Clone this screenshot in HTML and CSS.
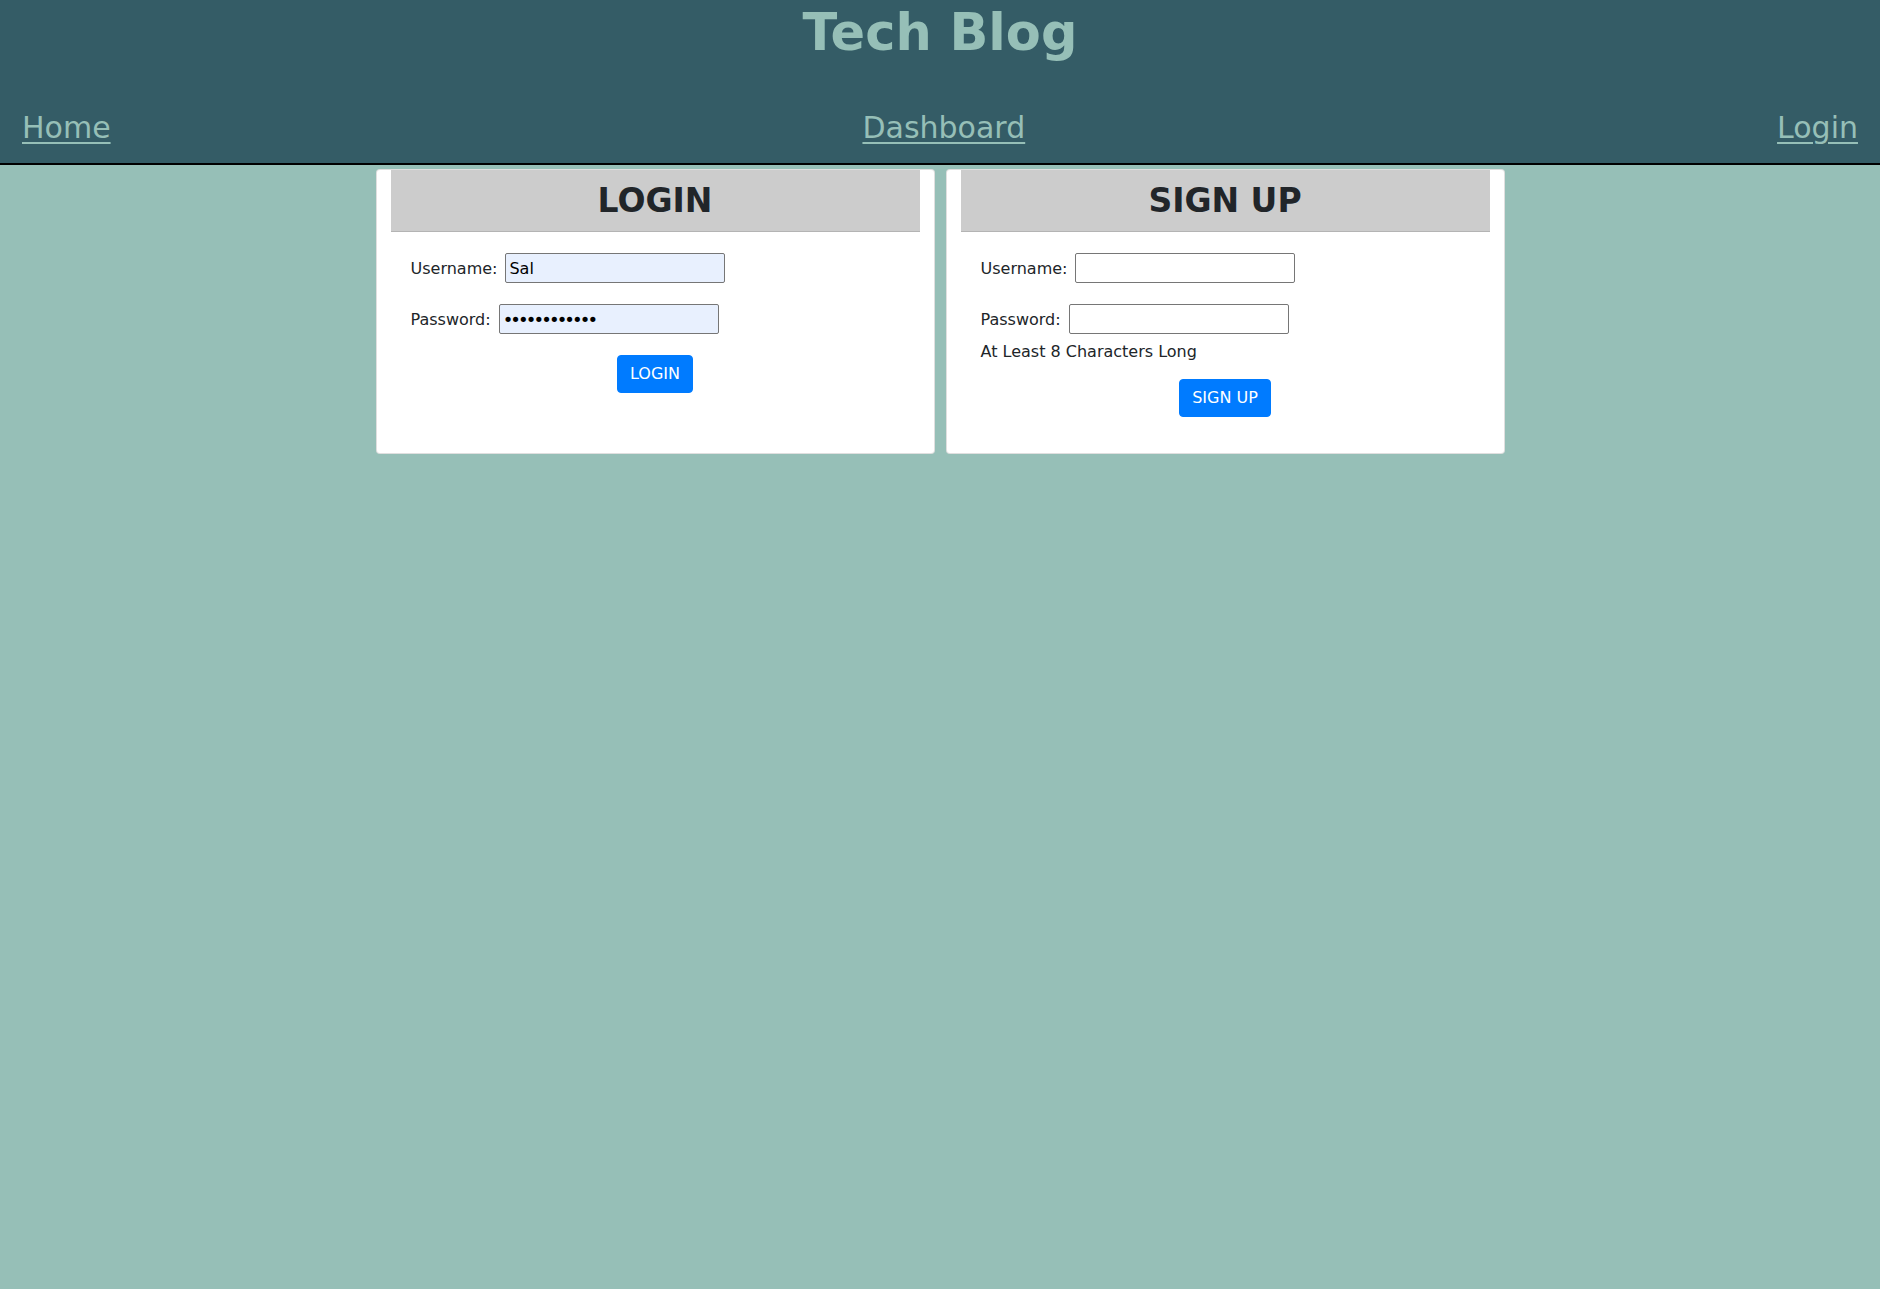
FILE: index.html
```
<!DOCTYPE html>
<html lang="en">
<head>
<meta charset="utf-8">
<title>Tech Blog</title>
<link rel="stylesheet" href="styles.css">
</head>
<body>
<header class="site-header">
  <h1 class="site-title">Tech Blog</h1>
  <nav class="site-nav">
    <a href="#" class="nav-link">Home</a>
    <a href="#" class="nav-link">Dashboard</a>
    <a href="#" class="nav-link">Login</a>
  </nav>
</header>
<main class="auth-row">
  <section class="card">
    <h2 class="card-header">LOGIN</h2>
    <form class="card-form">
      <div class="form-row">
        <label class="form-label" for="login-user">Username:</label>
        <input class="form-input autofilled" id="login-user" type="text" value="Sal">
      </div>
      <div class="form-row">
        <label class="form-label" for="login-pass">Password:</label>
        <input class="form-input form-password autofilled" id="login-pass" type="password" value="password1234">
      </div>
      <button class="btn-primary" type="button">LOGIN</button>
    </form>
  </section>
  <section class="card">
    <h2 class="card-header">SIGN UP</h2>
    <form class="card-form">
      <div class="form-row">
        <label class="form-label" for="signup-user">Username:</label>
        <input class="form-input" id="signup-user" type="text">
      </div>
      <div class="form-group">
        <div class="form-row">
          <label class="form-label" for="signup-pass">Password:</label>
          <input class="form-input form-password" id="signup-pass" type="password">
        </div>
        <p class="form-hint">At Least 8 Characters Long</p>
      </div>
      <button class="btn-primary" type="button">SIGN UP</button>
    </form>
  </section>
</main>
</body>
</html>
```
FILE: styles.css
```
html, body {
  margin: 0;
  padding: 0;
}
body {
  background: #96bfb7;
  font-family: "DejaVu Sans", Verdana, sans-serif;
  color: #212529;
  font-size: 16px;
  min-height: 1289px;
}
.site-header {
  background: #345c66;
  padding: 0 22px 17px;
  border-bottom: 2px solid #000;
}
.site-title {
  margin: 0;
  text-align: center;
  font-size: 51px;
  line-height: 66px;
  font-weight: bold;
  color: #96bfb7;
}
.site-nav {
  margin-top: 44px;
  display: flex;
  justify-content: space-between;
  line-height: 36px;
}
.nav-link {
  font-size: 30px;
  color: #96bfb7;
  text-decoration: underline;
  text-decoration-thickness: 2px;
  text-underline-offset: 4px;
}
.auth-row {
  width: 1129px;
  margin: 4px auto 0;
  display: flex;
  gap: 11px;
}
.card {
  flex: 1;
  background: #fff;
  border: 1px solid rgba(0, 0, 0, 0.125);
  border-radius: 4px;
  padding: 0 14px;
  display: flex;
  flex-direction: column;
}
.card-header {
  margin: 0;
  height: 62px;
  line-height: 62px;
  background: #cccccc;
  border-bottom: 1px solid #b4b4b4;
  box-sizing: border-box;
  text-align: center;
  font-size: 33px;
  font-weight: bold;
  color: #212529;
}
.card-form {
  display: flex;
  flex-direction: column;
  gap: 21px;
  padding: 21px 20px 36px;
}
.form-row {
  display: flex;
  align-items: center;
  gap: 8px;
}
.form-label {
  font-size: 16px;
  line-height: 20px;
  padding-top: 2px;
}
.form-input {
  width: 220px;
  height: 30px;
  box-sizing: border-box;
  border: 1px solid #767676;
  border-radius: 2px;
  padding: 1px 3px;
  font-family: "DejaVu Sans", Verdana, sans-serif;
  font-size: 16px;
  color: #000;
  background: #fff;
}
.form-password {
  font-size: 18px;
  letter-spacing: -2.9px;
}
.form-input.autofilled {
  background: #e8f0fe;
}
.form-hint {
  margin: 11px 0 0;
  font-size: 16px;
  line-height: 13px;
}
.btn-primary {
  align-self: center;
  font-family: "DejaVu Sans", Verdana, sans-serif;
  font-size: 16px;
  line-height: 24px;
  padding: 6px 12px;
  border: 1px solid #007bff;
  border-radius: 4px;
  background: #007bff;
  color: #fff;
}
```
